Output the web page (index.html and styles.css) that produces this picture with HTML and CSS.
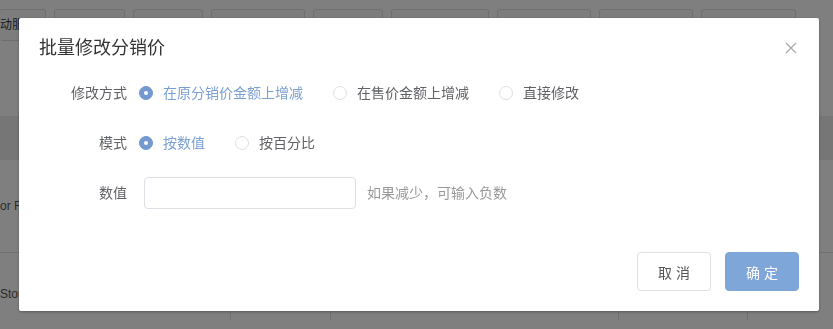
FILE: index.html
```html
<!DOCTYPE html>
<html lang="zh-CN">
<head>
  <meta charset="UTF-8">
  <title>批量修改分销价</title>
  <link rel="stylesheet" href="styles.css">
</head>
<body>
  <div class="page">
    <div class="tabs">
      <div class="tab tab-first"><span>动服</span></div>
      <div class="tab w71"></div>
      <div class="tab w70"></div>
      <div class="tab w94"></div>
      <div class="tab w70"></div>
      <div class="tab w98"></div>
      <div class="tab w94"></div>
      <div class="tab w94"></div>
      <div class="tab w95"></div>
    </div>
    <div class="table-head"></div>
    <div class="table-row"><span class="cell-text">or R</span></div>
    <div class="table-row row-last">
      <span class="cell-text">Stor</span>
      <div class="col col-a"></div>
      <div class="col col-b"></div>
      <div class="col col-c"></div>
      <div class="col col-d"></div>
    </div>
  </div>

  <div class="mask">
    <div class="dialog">
      <div class="dialog-header">
        <span class="dialog-title">批量修改分销价</span>
        <svg class="dialog-close" width="12" height="12" viewBox="0 0 12 12">
          <path d="M1 1 L11 11 M11 1 L1 11" stroke="#a8a8a8" stroke-width="1.2" fill="none"/>
        </svg>
      </div>
      <div class="dialog-body">
        <div class="form-item">
          <label class="form-label">修改方式</label>
          <div class="radio-group">
            <span class="radio checked"><span class="radio-dot"></span><span class="radio-text">在原分销价金额上增减</span></span>
            <span class="radio"><span class="radio-dot"></span><span class="radio-text">在售价金额上增减</span></span>
            <span class="radio"><span class="radio-dot"></span><span class="radio-text">直接修改</span></span>
          </div>
        </div>
        <div class="form-item">
          <label class="form-label">模式</label>
          <div class="radio-group">
            <span class="radio checked"><span class="radio-dot"></span><span class="radio-text">按数值</span></span>
            <span class="radio"><span class="radio-dot"></span><span class="radio-text">按百分比</span></span>
          </div>
        </div>
        <div class="form-item">
          <label class="form-label">数值</label>
          <input class="input" type="text">
          <span class="hint">如果减少，可输入负数</span>
        </div>
      </div>
      <div class="dialog-footer">
        <button class="btn">取 消</button>
        <button class="btn btn-primary">确 定</button>
      </div>
    </div>
  </div>
</body>
</html>
```

FILE: styles.css
```css
* { margin: 0; padding: 0; box-sizing: border-box; }
body {
  font-family: "Liberation Sans", "Noto Sans CJK SC", sans-serif;
  background: #fff;
  width: 833px;
  height: 329px;
  overflow: hidden;
}

/* page behind the mask */
.page { padding-top: 9px; height: 329px; overflow: hidden; }
.tabs { display: flex; gap: 8px; height: 32px; }
.tab {
  border: 1px solid #dcdcdc;
  border-radius: 3px;
  background: #fafafa;
  flex: none;
}
.tab-first {
  width: 46px;
  border-left: none;
  font-size: 12px;
  line-height: 30px;
  color: #333;
  white-space: nowrap;
}
.w70 { width: 70px; }
.w71 { width: 71px; }
.w94 { width: 94px; }
.w95 { width: 95px; }
.w98 { width: 98px; }
.table-head {
  margin-top: 75px;
  height: 44px;
  background: #ececec;
}
.table-row {
  height: 93px;
  border-bottom: 1px solid #e2e2e2;
  display: flex;
  align-items: center;
  position: relative;
}
.row-last {
  height: 67px;
  border-bottom: none;
  align-items: flex-start;
  padding-top: 34px;
}
.cell-text {
  font-size: 12px;
  line-height: 14px;
  color: #555;
  white-space: nowrap;
}
.col {
  position: absolute;
  top: 0;
  bottom: 0;
  border-left: 1px solid #e2e2e2;
}
.col-a { left: 230px; }
.col-b { left: 330px; }
.col-c { left: 618px; }
.col-d { left: 747px; }

/* mask and dialog */
.mask {
  position: fixed;
  inset: 0;
  background: rgba(0, 0, 0, 0.5);
}
.dialog {
  width: 800px;
  margin: 18px 0 0 19px;
  background: #fff;
  border-radius: 2px;
  box-shadow: 0 1px 3px rgba(0, 0, 0, 0.3);
}
.dialog-header {
  display: flex;
  justify-content: space-between;
  align-items: center;
  padding: 18px 22px 17px 20px;
}
.dialog-title {
  font-size: 18px;
  line-height: 24px;
  color: #333;
}
.dialog-close { display: block; }

.dialog-body { padding: 0 20px; }
.form-item {
  display: flex;
  align-items: center;
  height: 32px;
  margin-bottom: 18px;
  font-size: 14px;
  line-height: 20px;
}
.form-item:last-child { margin-bottom: 0; }
.form-label {
  width: 100px;
  padding-right: 12px;
  text-align: right;
  color: #606266;
}
.radio-group { display: flex; align-items: center; }
.radio {
  display: inline-flex;
  align-items: center;
  margin-right: 30px;
  color: #606266;
}
.radio-dot {
  width: 14px;
  height: 14px;
  border: 1px solid #dcdfe6;
  border-radius: 50%;
  background: #fff;
  position: relative;
}
.radio-text { margin-left: 10px; }
.radio.checked { color: #7a9fd3; }
.radio.checked .radio-dot {
  background: #7399d0;
  border-color: #7399d0;
}
.radio.checked .radio-dot::after {
  content: "";
  position: absolute;
  left: 4px;
  top: 4px;
  width: 4px;
  height: 4px;
  border-radius: 50%;
  background: #fff;
}
.input {
  width: 212px;
  height: 32px;
  margin-left: 5px;
  border: 1px solid #dcdfe6;
  border-radius: 4px;
  outline: none;
  padding: 0 12px;
}
.hint { margin-left: 11px; color: #999; }

.dialog-footer {
  display: flex;
  justify-content: flex-end;
  gap: 14px;
  padding: 43px 20px 20px;
}
.btn {
  width: 74px;
  height: 39px;
  border: 1px solid #dcdfe6;
  border-radius: 4px;
  background: #fff;
  color: #555;
  font-family: inherit;
  font-size: 14px;
}
.btn-primary {
  background: #7ea6d8;
  border-color: #7ea6d8;
  color: #fff;
}
```
